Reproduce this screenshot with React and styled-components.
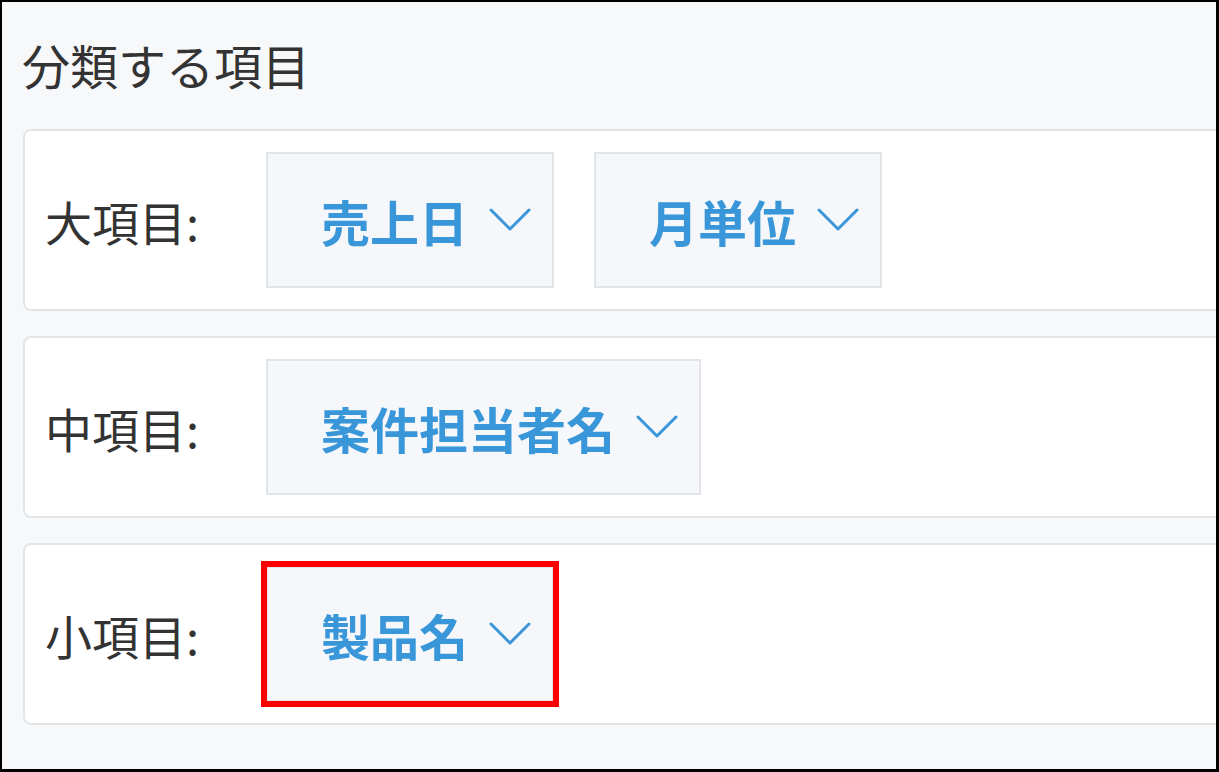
import React from 'react';
import styled, { createGlobalStyle } from 'styled-components';

const GlobalStyle = createGlobalStyle`
  html, body {
    margin: 0;
    padding: 0;
  }
  body {
    font-family: "Noto Sans CJK JP", "Noto Sans", sans-serif;
  }
`;

const Frame = styled.div`
  box-sizing: border-box;
  width: 1219px;
  height: 772px;
  overflow: hidden;
  background: #f7f8fa;
  border-style: solid;
  border-color: #000;
  border-width: 2px 3px 3px 2px;
  padding: 39px 0 0 20px;
`;

const Title = styled.h2`
  margin: 0 0 42px 0;
  font-size: 48px;
  line-height: 46px;
  font-weight: 400;
  color: #333;
`;

const CardList = styled.div`
  display: flex;
  flex-direction: column;
  gap: 25px;
`;

const Card = styled.div`
  box-sizing: border-box;
  width: 1240px;
  margin-left: 1px;
  display: flex;
  align-items: center;
  background: #fff;
  border: 2px solid #e3e6e9;
  border-radius: 8px;
  padding: 21px 20px;
`;

const Label = styled.div`
  width: 221px;
  flex-shrink: 0;
  font-size: 47px;
  color: #333;
`;

const Selects = styled.div`
  display: flex;
  gap: 40px;
`;

const Select = styled.button`
  box-sizing: border-box;
  height: 136px;
  display: flex;
  align-items: center;
  gap: 21px;
  padding: 0 21px 0 53px;
  background: #f5f7fa;
  border: 2px solid #e2e5e8;
  border-radius: 0;
  font-family: inherit;
  font-size: 49px;
  font-weight: 700;
  color: #3896d9;
  cursor: pointer;
  outline: ${(p) => (p.$marked ? '6px solid #ff0000' : 'none')};
  outline-offset: -1px;
`;

const Chevron = () => (
  <svg width="42" height="24" viewBox="0 0 42 24" fill="none">
    <path d="M2 2 L21 21 L40 2" stroke="#3896d9" strokeWidth="3" strokeLinecap="round" strokeLinejoin="round" />
  </svg>
);

const rows = [
  { label: '大項目:', items: ['売上日', '月単位'] },
  { label: '中項目:', items: ['案件担当者名'] },
  { label: '小項目:', items: ['製品名'], marked: true },
];

export default function App() {
  return (
    <>
      <GlobalStyle />
      <Frame>
        <Title>分類する項目</Title>
        <CardList>
          {rows.map((row) => (
            <Card key={row.label}>
              <Label>{row.label}</Label>
              <Selects>
                {row.items.map((item) => (
                  <Select key={item} $marked={row.marked}>
                    {item}
                    <Chevron />
                  </Select>
                ))}
              </Selects>
            </Card>
          ))}
        </CardList>
      </Frame>
    </>
  );
}
